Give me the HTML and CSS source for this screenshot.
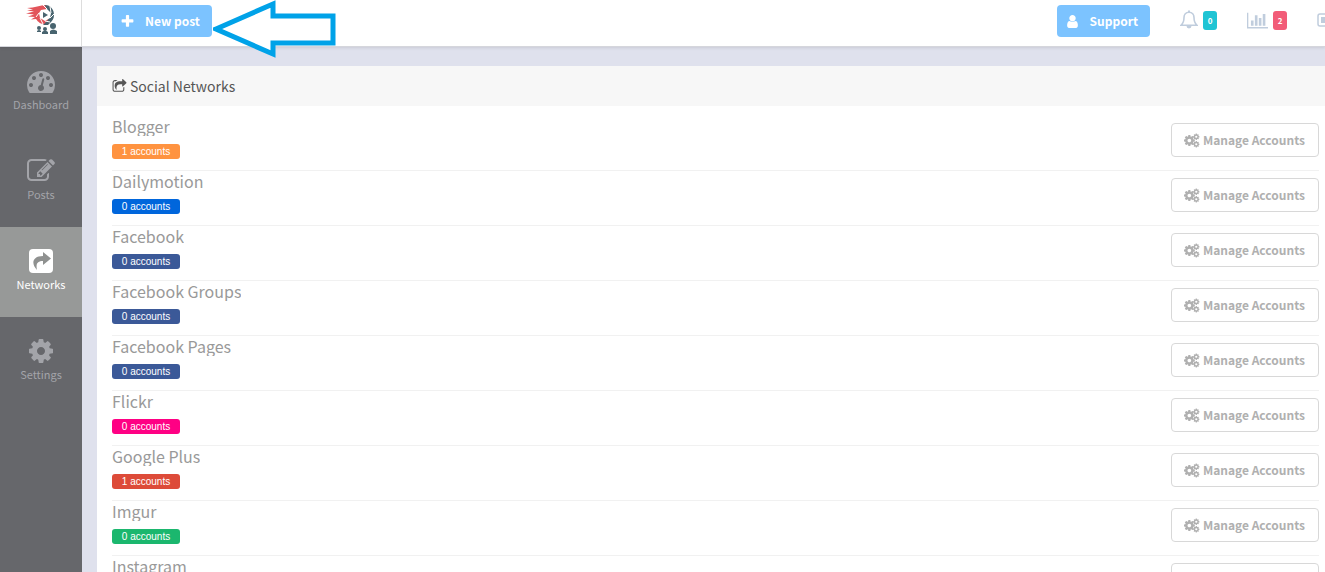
FILE: index.html
```html
<!DOCTYPE html>
<html lang="en">
<head>
  <meta charset="UTF-8" />
  <meta name="viewport" content="width=device-width, initial-scale=1.0"/>
  <title>Social Networks</title>
  <link rel="stylesheet" href="styles.css">
</head>
<body>
  <svg class="sprite" aria-hidden="true">
    <symbol id="i-dashboard" viewBox="0 0 1792 1792"><path d="M384 1152q0-53-37.5-90.5t-90.5-37.5-90.5 37.5-37.5 90.5 37.5 90.5 90.5 37.5 90.5-37.5 37.5-90.5zm192-448q0-53-37.5-90.5t-90.5-37.5-90.5 37.5-37.5 90.5 37.5 90.5 90.5 37.5 90.5-37.5 37.5-90.5zm428 481l101-382q6-26-7.5-48.5t-38.5-29.5-48 6.5-30 39.5l-101 382q-60 5-107 43.5t-63 98.5q-20 77 20 146t117 89 146-20 89-117q16-60-6-117t-72-91zm660-33q0-53-37.5-90.5t-90.5-37.5-90.5 37.5-37.5 90.5 37.5 90.5 90.5 37.5 90.5-37.5 37.5-90.5zm-640-640q0-53-37.5-90.5t-90.5-37.5-90.5 37.5-37.5 90.5 37.5 90.5 90.5 37.5 90.5-37.5 37.5-90.5zm448 192q0-53-37.5-90.5t-90.5-37.5-90.5 37.5-37.5 90.5 37.5 90.5 90.5 37.5 90.5-37.5 37.5-90.5zm320 448q0 261-141 483-19 29-54 29h-1402q-35 0-54-29-141-221-141-483 0-182 71-348t191-286 286-191 348-71 348 71 286 191 191 286 71 348z"/></symbol>
    <symbol id="i-edit" viewBox="0 0 1792 1792"><path d="M888 1184l116-116-152-152-116 116v56h96v96h56zm440-720q-16-16-33 1l-350 350q-17 17-1 33t33-1l350-350q17-17 1-33zm80 594v190q0 119-84.5 203.5t-203.5 84.5h-832q-119 0-203.5-84.5t-84.5-203.5v-832q0-119 84.5-203.5t203.5-84.5h832q63 0 117 25 15 7 18 23 3 17-9 29l-49 49q-14 14-32 8-23-6-45-6h-832q-66 0-113 47t-47 113v832q0 66 47 113t113 47h832q66 0 113-47t47-113v-126q0-13 9-22l64-64q15-15 35-7t20 29zm-96-738l288 288-672 672h-288v-288zm444 132l-92 92-288-288 92-92q28-28 68-28t68 28l152 152q28 28 28 68t-28 68z"/></symbol>
    <symbol id="i-share" viewBox="0 0 28 28"><rect x="2" y="2" width="24" height="24" rx="4"/><path class="share-arrow" d="M16 5l8 6.500L16 18v-4c-5 0-7.500 2-6 9C4 17 5 9 16 9z"/></symbol>
    <symbol id="i-share-o" viewBox="0 0 1792 1792"><path d="M1472 989v259q0 119-84.5 203.5t-203.5 84.5h-832q-119 0-203.5-84.5t-84.5-203.5v-832q0-119 84.5-203.5t203.5-84.5h255q13 0 22.5 9.500t9.500 22.500q0 27-26 32-77 26-133 60-10 4-16 4h-112q-66 0-113 47t-47 113v832q0 66 47 113t113 47h832q66 0 113-47t47-113v-214q0-19 18-29 28-13 54-37 16-16 35-8 21 9 21 29zm237-496l-384 384q-18 19-45 19-12 0-25-5-39-17-39-59v-192h-160q-323 0-438 131-119 137-74 473 3 23-20 34-8 2-12 2-16 0-26-13-10-14-21-31t-39.500-68.500-49.500-99.500-38.500-114-17.500-122q0-49 3.500-91t14-90 28-88 47-81.500 68.500-74 94.500-61.500 124.500-48.500 159.500-30.500 196.500-11h160v-192q0-42 39-59 13-5 25-5 26 0 45 19l384 384q19 19 19 45t-19 45z"/></symbol>
    <symbol id="i-cog" viewBox="0 0 1792 1792"><path d="M1152 896q0-106-75-181t-181-75-181 75-75 181 75 181 181 75 181-75 75-181zm512-109v222q0 12-8 23t-20 13l-185 28q-19 54-39 91 35 50 107 138 10 12 10 25t-9 23q-27 37-99 108t-94 71q-12 0-26-9l-138-108q-44 23-91 38-16 136-29 186-7 28-36 28h-222q-14 0-24.5-8.5t-11.5-21.5l-28-184q-49-16-90-37l-141 107q-10 9-25 9-14 0-25-11-126-114-165-168-7-10-7-23 0-12 8-23 15-21 51-66.5t54-70.5q-27-50-41-99l-183-27q-13-2-21-12.5t-8-23.5v-222q0-12 8-23t19-13l186-28q14-46 39-92-40-57-107-138-10-12-10-24 0-10 9-23 26-36 98.5-107.5t94.5-71.5q13 0 26 10l138 107q44-23 91-38 16-136 29-186 7-28 36-28h222q14 0 24.5 8.5t11.5 21.5l28 184q49 16 90 37l142-107q9-9 24-9 13 0 25 10 129 119 165 170 7 8 7 22 0 12-8 23-15 21-51 66.5t-54 70.5q26 50 41 98l183 28q13 2 21 12.5t8 23.5z"/></symbol>
    <symbol id="i-cogs" viewBox="0 0 15 14"><use href="#i-cog" x="-1" y="1" width="12" height="12"/><use href="#i-cog" x="8" y="0" width="7" height="7"/><use href="#i-cog" x="8" y="7" width="7" height="7"/></symbol>
    <symbol id="i-plus" viewBox="0 0 1792 1792"><path d="M1600 736v192q0 40-28 68t-68 28h-416v416q0 40-28 68t-68 28h-192q-40 0-68-28t-28-68v-416h-416q-40 0-68-28t-28-68v-192q0-40 28-68t68-28h416v-416q0-40 28-68t68-28h192q40 0 68 28t28 68v416h416q40 0 68 28t28 68z"/></symbol>
    <symbol id="i-user" viewBox="0 0 1792 1792"><path d="M1536 1399q0 109-62.5 187t-150.5 78h-854q-88 0-150.5-78t-62.5-187q0-85 8.5-160.5t31.5-152 58.5-131 94-89 134.5-34.5q131 128 313 128t313-128q76 0 134.5 34.5t94 89 58.5 131 31.5 152 8.5 160.5zm-256-887q0 159-112.5 271.5t-271.5 112.5-271.5-112.5-112.5-271.5 112.5-271.5 271.5-112.5 271.5 112.5 112.5 271.5z"/></symbol>
    <symbol id="i-bell" viewBox="0 0 18 20"><path fill="none" stroke="currentColor" stroke-width="1.600" d="M9 2.200c-3.200 0-5 2.300-5 5.300 0 4.200-1.300 6.300-3 7.800h16c-1.700-1.500-3-3.600-3-7.800 0-3-1.800-5.300-5-5.300z"/><path d="M8 .5h2v2H8zM6.500 16h5a2.500 2.500 0 0 1-5 0z"/></symbol>
    <symbol id="i-chart" viewBox="0 0 2048 1792"><path d="M640 896v512h-256v-512h256zm384-512v1024h-256v-1024h256zm1024 1152v128h-2048v-1536h128v1408h1920zm-640-896v768h-256v-768h256zm384-384v1152h-256v-1152h256z"/></symbol>
    <symbol id="i-wallet" viewBox="0 0 20 14"><rect x="1" y="1" width="18" height="12" rx="2" fill="none" stroke="currentColor" stroke-width="1.500"/><rect x="4" y="4" width="12" height="6"/></symbol>
  </svg>

  <header class="topbar">
    <a class="logo" href="#" aria-label="Home">
      <svg width="34" height="32" viewBox="0 0 34 32">
        <path fill="#e2545a" d="M21 1C15 1 10 4 2 4l6 1.500-6 1 7 1-8 2 8 1-6 2 7 .5-4 2.500 5-.5c2 3 5 5.500 10 5.500l3-4-3-16z"/>
        <path fill="#48646f" d="M20 1c6 0 9 5 9 10 0 4-2 6-4 8l-2 2h-5l5-5 1-5-2-5z"/>
        <path fill="#fff" d="M16 6l6-1 4 4-1 5-5 3-5-3-1-5z"/>
        <path fill="none" stroke="#fff" d="M22 5l-4-4M26 9l-1-7M25 14l4-4M20 17l5 1M15 14l3 6M14 9l-3 4"/>
        <path fill="#48646f" d="M18 8l5 3-5 3z"/>
        <g fill="#48646f">
          <circle cx="14" cy="24" r="2"/><path d="M12 28v-1q2-2 4 0v1z"/>
          <circle cx="20" cy="25" r="2"/><path d="M17 30v-2q3-3 6 0v2z"/>
          <circle cx="28" cy="22" r="3"/><path d="M25 30v-3q3-3 7 0v3z"/>
        </g>
      </svg>
    </a>
    <div class="topbar-main">
      <button class="btn btn-primary" type="button"><svg class="icon"><use href="#i-plus"/></svg>New post</button>
      <div class="topbar-right">
        <button class="btn btn-primary btn-support" type="button"><svg class="icon"><use href="#i-user"/></svg>Support</button>
        <a class="notice" href="#" aria-label="Notifications"><svg width="18" height="20"><use href="#i-bell"/></svg><span class="count teal">0</span></a>
        <a class="notice" href="#" aria-label="Statistics"><svg width="21" height="19"><use href="#i-chart"/></svg><span class="count red">2</span></a>
        <a class="notice cut" href="#" aria-label="Billing"><svg width="20" height="14"><use href="#i-wallet"/></svg></a>
      </div>
    </div>
  </header>

  <!-- hint pointing at the New post button -->
  <svg class="hint" width="124" height="60" viewBox="0 0 124 60" aria-hidden="true">
    <path d="M3 29L60 4v12h60v27H60v11z"/>
  </svg>

  <div class="layout">
    <nav class="sidebar">
      <a href="#"><svg><use href="#i-dashboard"/></svg>Dashboard</a>
      <a href="#"><svg><use href="#i-edit"/></svg>Posts</a>
      <a href="#" class="active"><svg><use href="#i-share"/></svg>Networks</a>
      <a href="#"><svg><use href="#i-cog"/></svg>Settings</a>
    </nav>

    <main class="content">
      <section class="panel">
        <h1 class="panel-title"><svg><use href="#i-share-o"/></svg>Social Networks</h1>
        <ul class="networks">
          <li>
            <div><h2>Blogger</h2><span class="badge blogger">1 accounts</span></div>
            <button class="btn btn-manage" type="button"><svg><use href="#i-cogs"/></svg>Manage Accounts</button>
          </li>
          <li>
            <div><h2>Dailymotion</h2><span class="badge dailymotion">0 accounts</span></div>
            <button class="btn btn-manage" type="button"><svg><use href="#i-cogs"/></svg>Manage Accounts</button>
          </li>
          <li>
            <div><h2>Facebook</h2><span class="badge facebook">0 accounts</span></div>
            <button class="btn btn-manage" type="button"><svg><use href="#i-cogs"/></svg>Manage Accounts</button>
          </li>
          <li>
            <div><h2>Facebook Groups</h2><span class="badge facebook">0 accounts</span></div>
            <button class="btn btn-manage" type="button"><svg><use href="#i-cogs"/></svg>Manage Accounts</button>
          </li>
          <li>
            <div><h2>Facebook Pages</h2><span class="badge facebook">0 accounts</span></div>
            <button class="btn btn-manage" type="button"><svg><use href="#i-cogs"/></svg>Manage Accounts</button>
          </li>
          <li>
            <div><h2>Flickr</h2><span class="badge flickr">0 accounts</span></div>
            <button class="btn btn-manage" type="button"><svg><use href="#i-cogs"/></svg>Manage Accounts</button>
          </li>
          <li>
            <div><h2>Google Plus</h2><span class="badge google">1 accounts</span></div>
            <button class="btn btn-manage" type="button"><svg><use href="#i-cogs"/></svg>Manage Accounts</button>
          </li>
          <li>
            <div><h2>Imgur</h2><span class="badge imgur">0 accounts</span></div>
            <button class="btn btn-manage" type="button"><svg><use href="#i-cogs"/></svg>Manage Accounts</button>
          </li>
          <li>
            <div><h2>Instagram</h2></div>
            <button class="btn btn-manage" type="button"><svg><use href="#i-cogs"/></svg>Manage Accounts</button>
          </li>
        </ul>
      </section>
    </main>
  </div>
</body>
</html>
```
FILE: styles.css
```css
* {
  box-sizing: border-box;
}

body {
  margin: 0;
  height: 100vh;
  display: flex;
  flex-direction: column;
  overflow: hidden;
  background-color: #dfe1ed;
  font-family: "Noto Sans CJK JP", "Noto Sans", sans-serif;
  color: #999;
}

svg {
  fill: currentColor;
  flex: none;
}

a {
  color: inherit;
  text-decoration: none;
}

.sprite {
  position: absolute;
  width: 0;
  height: 0;
}

.topbar {
  display: flex;
  flex: none;
  height: 47px;
  background-color: #fff;
  border-bottom: 1px solid #d5d6dc;
  box-shadow: 0 1px 3px rgba(0, 0, 0, 0.1);
  z-index: 1;
}

.logo {
  width: 82px;
  padding: 4px 0 0 25px;
  border-right: 1px solid #ddd;
}

.topbar-main {
  flex: 1;
  display: flex;
  justify-content: space-between;
  align-items: flex-start;
  padding: 5px 0 0 30px;
}

.topbar-right {
  display: flex;
}

.btn {
  display: flex;
  align-items: center;
  border-radius: 4px;
  font-family: inherit;
  font-size: 12px;
  font-weight: 700;
  line-height: 20px;
  white-space: nowrap;
  cursor: pointer;
}

.btn-primary {
  height: 32px;
  padding: 0 12px 0 8px;
  border: none;
  background-color: #7cc3ff;
  color: #fff;
}

.btn-primary .icon {
  width: 15px;
  height: 15px;
  margin-right: 10px;
}

.btn-support {
  margin-right: 30px;
}

.notice {
  display: flex;
  align-items: center;
  height: 30px;
  margin-right: 30px;
  color: #c0cddd;
}

.notice.cut {
  width: 8px;
  margin-right: 0;
  overflow: hidden;
}

.count {
  width: 14px;
  margin-left: 5px;
  border-radius: 3px;
  color: #fff;
  font-size: 8px;
  font-weight: 700;
  line-height: 19px;
  text-align: center;
}

.teal {
  background-color: #1fc4d4;
}

.red {
  background-color: #f25c78;
}

.hint {
  position: absolute;
  top: 0;
  left: 213px;
  z-index: 2;
}

.hint path {
  fill: #fff;
  stroke: #00a2e8;
  stroke-width: 5px;
}

.layout {
  flex: 1;
  display: flex;
  min-height: 0;
}

.sidebar {
  width: 82px;
  background-color: #66676b;
}

.sidebar a {
  display: flex;
  flex-direction: column;
  align-items: center;
  height: 90px;
  padding-top: 20px;
  color: #a3a4a9;
  font-size: 11px;
  line-height: 18px;
}

.sidebar svg {
  width: 28px;
  height: 28px;
}

.sidebar .active {
  background-color: #979998;
  color: #fff;
}

.share-arrow {
  fill: #8f9190;
}

.content {
  flex: 1;
  padding: 19px 0 0 15px;
}

.panel {
  background-color: #fff;
}

.panel-title {
  display: flex;
  align-items: center;
  height: 40px;
  margin: 0;
  padding-left: 15px;
  background-color: #f7f7f7;
  color: #555;
  font-size: 14px;
  font-weight: 400;
}

.panel-title svg {
  width: 15px;
  height: 15px;
  margin-right: 3px;
}

.networks {
  margin: 0;
  padding: 10px 6px 10px 15px;
  list-style: none;
}

.networks li {
  display: flex;
  justify-content: space-between;
  align-items: flex-start;
  height: 55px;
  border-bottom: 1px solid #f1f1f1;
}

.networks h2 {
  height: 20px;
  margin: 0 0 8px;
  overflow: hidden;
  font-size: 16px;
  font-weight: 400;
  line-height: 20px;
}

.badge {
  display: block;
  width: 68px;
  border-radius: 3px;
  color: #fff;
  font-family: "Liberation Sans", Arial, sans-serif;
  font-size: 10px;
  line-height: 15px;
  text-align: center;
}

.blogger { background-color: #ff9340; }
.dailymotion { background-color: #0066dc; }
.facebook { background-color: #3b5998; }
.flickr { background-color: #ff0084; }
.google { background-color: #dd4b39; }
.imgur { background-color: #1bb76e; }

.btn-manage {
  height: 34px;
  margin-top: 7px;
  padding: 0 13px 0 12px;
  border: 1px solid #d8d8d8;
  background-color: #fff;
  color: #b0b0b0;
}

.btn-manage svg {
  width: 16px;
  height: 15px;
  margin-right: 3px;
}
```
